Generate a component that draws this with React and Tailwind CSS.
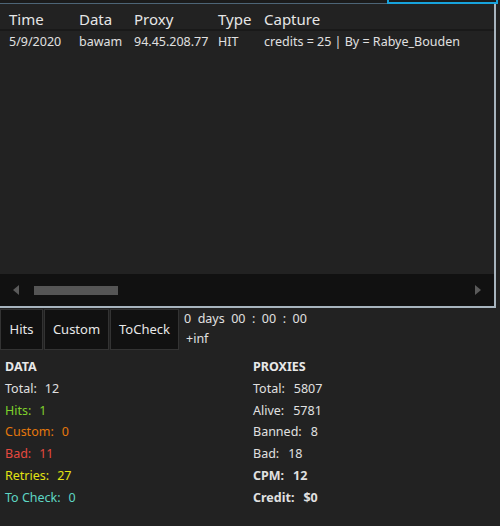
import React from "react";

const font = { fontFamily: '"Segoe UI", "Noto Sans", "Open Sans", sans-serif' };

const columns = [
  { title: "Time", w: "w-[70px]" },
  { title: "Data", w: "w-[55px]" },
  { title: "Proxy", w: "w-[84px]" },
  { title: "Type", w: "w-[46px]" },
  { title: "Capture", w: "flex-1" },
];

const row = ["5/9/2020", "bawam", "94.45.208.77", "HIT", "credits = 25 | By = Rabye_Bouden"];

const dataStats = [
  { label: "Total:", value: "12", color: "text-[#e0e0e0]" },
  { label: "Hits:", value: "1", color: "text-[#7fd12b]" },
  { label: "Custom:", value: "0", color: "text-[#e5780c]" },
  { label: "Bad:", value: "11", color: "text-[#e5493f]" },
  { label: "Retries:", value: "27", color: "text-[#e3e312]" },
  { label: "To Check:", value: "0", color: "text-[#5ed6c4]" },
];

const proxyStats = [
  { label: "Total:", value: "5807" },
  { label: "Alive:", value: "5781" },
  { label: "Banned:", value: "8" },
  { label: "Bad:", value: "18" },
  { label: "CPM:", value: "12", bold: true },
  { label: "Credit:", value: "$0", bold: true },
];

const TabButton = ({ title, w }) => (
  <button className={`${w} h-[41px] bg-[#111111] border border-[#333333] text-[13px] text-[#e8e8e8] flex items-center justify-center`}>
    {title}
  </button>
);

export default function App() {
  return (
    <div className="w-[500px] h-[526px] bg-[#222222] overflow-hidden relative" style={font}>
      {/* top strip */}
      <div className="h-[4px] flex">
        <div className="w-[387px] border-b border-[#4d6577] bg-[#1b1b1b]" />
        <div className="w-[111px] border-l-2 border-r-2 border-b-2 border-[#17a3dc] bg-[#1b1b1b]" />
      </div>

      {/* grid */}
      <div className="w-[496px] h-[304px] border-r-2 border-b-2 border-[#a7b4be] flex flex-col">
        <div className="h-[27px] flex items-end pl-[9px] text-[15px] text-[#e6e6e6] border-b-2 border-[#191919] pb-[1px]">
          {columns.map((c) => (
            <div key={c.title} className={`${c.w} leading-[18px]`}>{c.title}</div>
          ))}
        </div>
        <div className="flex pl-[9px] pt-[2px] text-[12.5px] text-[#e0e0e0] h-[20px] items-center">
          {row.map((v, i) => (
            <div key={i} className={`${columns[i].w} overflow-hidden whitespace-nowrap pr-[6px]`}>{v}</div>
          ))}
        </div>
        <div className="flex-1" />
        <div className="h-[32px] bg-[#111111] flex items-center px-[12px]">
          <svg width="8" height="10" viewBox="0 0 8 10">
            <path d="M7 0 L1 5 L7 10 Z" fill="#5a5a5a" />
          </svg>
          <div className="ml-[14px] w-[84px] h-[9px] bg-[#555555]" />
          <div className="flex-1" />
          <svg width="8" height="10" viewBox="0 0 8 10">
            <path d="M1 0 L7 5 L1 10 Z" fill="#5a5a5a" />
          </svg>
        </div>
      </div>

      {/* tabs + timer */}
      <div className="flex mt-[1px]">
        <div className="flex gap-[1px]">
          <TabButton title="Hits" w="w-[43px]" />
          <TabButton title="Custom" w="w-[65px]" />
          <TabButton title="ToCheck" w="w-[69px]" />
        </div>
        <div className="pl-[5px] text-[12.5px] text-[#e0e0e0] leading-[20px]">
          <div className="whitespace-pre">0  days  00  :  00  :  00</div>
          <div className="pl-[2px]">+inf</div>
        </div>
      </div>

      {/* stats */}
      <div className="flex pt-[6px] text-[12.5px] leading-[21.8px]">
        <div className="w-[253px] pl-[5px]">
          <div className="font-bold text-[#e8e8e8]">DATA</div>
          {dataStats.map((s) => (
            <div key={s.label} className={`${s.color} whitespace-nowrap`}>
              {s.label}
              <span className="ml-[8px]">{s.value}</span>
            </div>
          ))}
        </div>
        <div>
          <div className="font-bold text-[#e8e8e8]">PROXIES</div>
          {proxyStats.map((s) => (
            <div key={s.label} className={`text-[#e0e0e0] whitespace-nowrap ${s.bold ? "font-bold" : ""}`}>
              {s.label}
              <span className="ml-[9px]">{s.value}</span>
            </div>
          ))}
        </div>
      </div>
    </div>
  );
}
